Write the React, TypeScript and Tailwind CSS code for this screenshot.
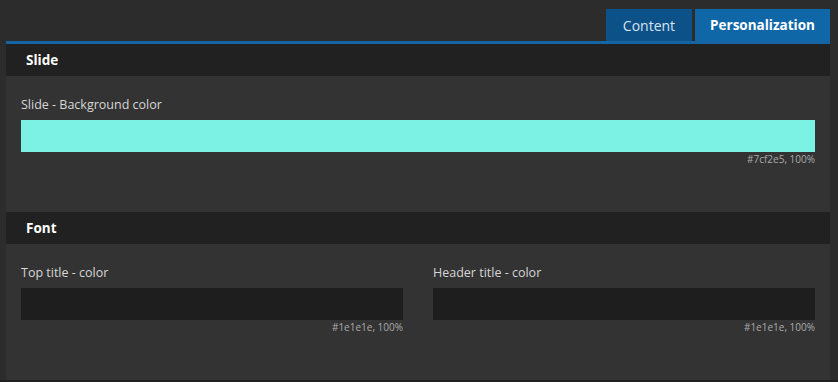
const font = { fontFamily: '"Open Sans", "Noto Sans", sans-serif' };

function ColorField({ label, color, caption }: { label: string; color: string; caption: string }) {
  return (
    <div className="flex flex-col">
      <div className="text-[12.5px] leading-[18px] text-[#d6d6d6]">{label}</div>
      <div className="mt-[6px] h-8 w-full" style={{ backgroundColor: color }} />
      <div className="text-right text-[10px] leading-[14px] text-[#aaaaaa]">{caption}</div>
    </div>
  );
}

function Section({ title, children }: { title: string; children: React.ReactNode }) {
  return (
    <section>
      <div className="flex h-8 items-center bg-[#212121] pl-5 text-[13.5px] font-bold text-white">
        {title}
      </div>
      <div className="px-[15px] pt-5 pb-[46px]">{children}</div>
    </section>
  );
}

export default function App() {
  return (
    <div className="flex h-[382px] w-[838px] flex-col bg-[#2c2c2c]" style={font}>
      <div className="flex-1 pt-[9px] pl-[6px]">
        <div className="w-[824px]">
          <div className="flex justify-end gap-[3px]">
            <button className="h-8 w-[86px] bg-[#0c5188] text-[14px] text-[#d8e4ee]">Content</button>
            <button className="h-8 w-[135px] bg-[#1067a8] text-[13.5px] font-bold text-white">
              Personalization
            </button>
          </div>
          <div className="h-[339px] border-t-[3px] border-[#1565a5] bg-[#333333]">
            <Section title="Slide">
              <ColorField label="Slide - Background color" color="#7cf2e5" caption="#7cf2e5, 100%" />
            </Section>
            <Section title="Font">
              <div className="grid grid-cols-2 gap-[30px]">
                <ColorField label="Top title - color" color="#1e1e1e" caption="#1e1e1e, 100%" />
                <ColorField label="Header title - color" color="#1e1e1e" caption="#1e1e1e, 100%" />
              </div>
            </Section>
          </div>
        </div>
      </div>
      <div className="h-[2px] bg-[#202020]" />
    </div>
  );
}
